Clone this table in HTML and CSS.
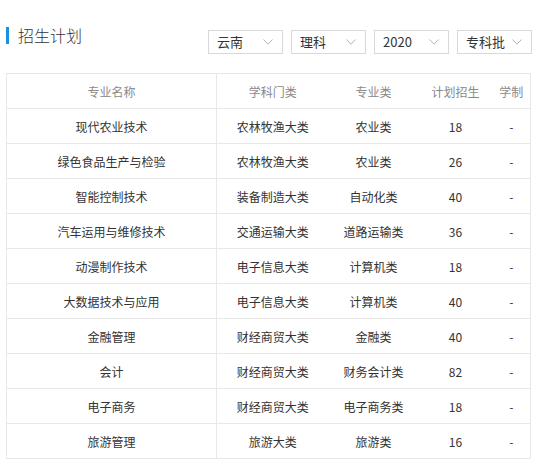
FILE: index.html
```html
<!DOCTYPE html>
<html lang="zh-CN">
<head>
<meta charset="utf-8">
<link rel="stylesheet" href="styles.css">
</head>
<body>
<div class="page">
  <div class="top">
    <h2 class="title">招生计划</h2>
    <div class="filters">
      <div class="select"><span>云南</span><svg class="chev" viewBox="0 0 10 6"><path d="M0.5 0.5 L5 5.2 L9.5 0.5"/></svg></div>
      <div class="select"><span>理科</span><svg class="chev" viewBox="0 0 10 6"><path d="M0.5 0.5 L5 5.2 L9.5 0.5"/></svg></div>
      <div class="select"><span>2020</span><svg class="chev" viewBox="0 0 10 6"><path d="M0.5 0.5 L5 5.2 L9.5 0.5"/></svg></div>
      <div class="select"><span>专科批</span><svg class="chev" viewBox="0 0 10 6"><path d="M0.5 0.5 L5 5.2 L9.5 0.5"/></svg></div>
    </div>
  </div>
  <table class="plan">
    <colgroup>
      <col class="c1"><col class="c2"><col class="c3"><col class="c4"><col class="c5">
    </colgroup>
    <thead>
      <tr><th class="first">专业名称</th><th>学科门类</th><th>专业类</th><th>计划招生</th><th>学制</th></tr>
    </thead>
    <tbody>
      <tr><td class="first">现代农业技术</td><td>农林牧渔大类</td><td>农业类</td><td>18</td><td>-</td></tr>
      <tr><td class="first">绿色食品生产与检验</td><td>农林牧渔大类</td><td>农业类</td><td>26</td><td>-</td></tr>
      <tr><td class="first">智能控制技术</td><td>装备制造大类</td><td>自动化类</td><td>40</td><td>-</td></tr>
      <tr><td class="first">汽车运用与维修技术</td><td>交通运输大类</td><td>道路运输类</td><td>36</td><td>-</td></tr>
      <tr><td class="first">动漫制作技术</td><td>电子信息大类</td><td>计算机类</td><td>18</td><td>-</td></tr>
      <tr><td class="first">大数据技术与应用</td><td>电子信息大类</td><td>计算机类</td><td>40</td><td>-</td></tr>
      <tr><td class="first">金融管理</td><td>财经商贸大类</td><td>金融类</td><td>40</td><td>-</td></tr>
      <tr><td class="first">会计</td><td>财经商贸大类</td><td>财务会计类</td><td>82</td><td>-</td></tr>
      <tr><td class="first">电子商务</td><td>财经商贸大类</td><td>电子商务类</td><td>18</td><td>-</td></tr>
      <tr><td class="first">旅游管理</td><td>旅游大类</td><td>旅游类</td><td>16</td><td>-</td></tr>
    </tbody>
  </table>
</div>
</body>
</html>
```

FILE: styles.css
```css
* { box-sizing: border-box; }
html, body { margin: 0; padding: 0; background: #fff; }
body {
  font-family: "Microsoft YaHei", "Noto Sans CJK SC", "Noto Sans", sans-serif;
  color: #333;
}
.page { padding: 0 6px 0 6px; width: 536px; }
.top {
  display: flex;
  justify-content: space-between;
  align-items: flex-start;
  height: 73px;
}
.title {
  margin: 27px 0 0 0;
  font-size: 16px;
  font-weight: 300;
  line-height: 21px;
  color: #333;
  border-left: 3px solid #1a8fe3;
  padding-left: 9px;
  height: 17px;
  display: flex;
  align-items: center;
}
.filters {
  display: flex;
  gap: 8px;
  margin-top: 30px;
  margin-right: -2px;
}
.select {
  width: 75px;
  height: 24px;
  border: 1px solid #d9d9d9;
  display: flex;
  align-items: center;
  justify-content: space-between;
  padding: 0 9px 0 8px;
  font-size: 13px;
  color: #333;
  background: #fff;
}
.select span { line-height: 22px; }
.chev { width: 10px; height: 6px; display: block; }
.chev path { fill: none; stroke: #b5b5b5; stroke-width: 1; }
.plan {
  width: 524px;
  border-collapse: collapse;
  table-layout: fixed;
  border: 1px solid #e8e8e8;
  font-size: 12px;
}
.c1 { width: 210px; }
.c2 { width: 112px; }
.c3 { width: 90px; }
.c4 { width: 74px; }
.c5 { width: 38px; }
.plan th, .plan td {
  height: 35px;
  padding: 0;
  text-align: center;
  border-bottom: 1px solid #e8e8e8;
  font-weight: normal;
  white-space: nowrap;
}
.plan th { color: #8a8a8a; }
.plan td { color: #333; }
.plan .first { border-right: 1px solid #e8e8e8; }
```
